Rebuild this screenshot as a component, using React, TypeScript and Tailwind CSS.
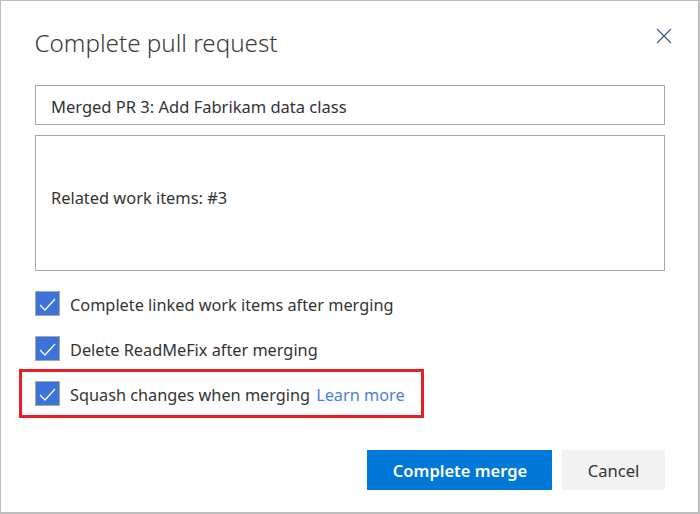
function Check({ label, link }: { label: string; link?: string }) {
  return (
    <div className="flex items-center h-[25px]">
      <span className="w-[25px] h-[25px] shrink-0 flex items-center justify-center bg-[#3b73d9] border border-[#a6a6a6]">
        <svg width="23" height="23" viewBox="0 0 23 23" fill="none">
          <path d="M4 13 L9 18 L19 7" stroke="#ffffff" strokeWidth="1.3" />
        </svg>
      </span>
      <span className="ml-[10px] text-[16.3px] leading-[27px] pt-[3px] text-[#333333] whitespace-nowrap">{label}</span>
      {link && <span className="ml-[6px] text-[16.3px] leading-[27px] pt-[3px] text-[#4a7fe0] whitespace-nowrap">{link}</span>}
    </div>
  );
}

export default function App() {
  return (
    <div className="w-[700px] h-[514px] bg-white border border-[#bdbdbd] border-b-2 border-r-2 pl-[34px] pr-[33px] relative overflow-hidden font-['Noto_Sans','Open_Sans',sans-serif]">
      <div className="h-[84px] pt-[25px] flex justify-between items-start">
        <h1 className="text-[24.2px] leading-[36px] font-light text-[#3c3c3c] ml-[-0.5px] mt-[-1px]">Complete pull request</h1>
        <svg className="mt-[2px] mr-[-7px]" width="16" height="16" viewBox="0 0 16 16" fill="none">
          <path d="M1 1 L15 15 M15 1 L1 15" stroke="#3a5a78" strokeWidth="1.2" />
        </svg>
      </div>
      <div className="h-[40px] border border-[#a6a6a6] flex items-center pl-[15px] pt-[5px] text-[16.5px] text-[#333333]">
        Merged PR 3: Add Fabrikam data class
      </div>
      <div className="mt-[10px] h-[136px] border border-[#a6a6a6] flex items-center pl-[15px] pb-[10px] text-[16.4px] text-[#333333]">
        Related work items: #3
      </div>
      <div className="mt-[20px] flex flex-col gap-[20px]">
        <Check label="Complete linked work items after merging" />
        <Check label="Delete ReadMeFix after merging" />
        <div className="relative">
          <Check label="Squash changes when merging" link="Learn more" />
          <div className="absolute left-[-16px] top-[-12px] w-[405px] h-[49px] border-[3px] border-[#ed1c24]" />
        </div>
      </div>
      <div className="mt-[44px] flex justify-end gap-[10px]">
        <button className="w-[185px] h-[40px] bg-[#0078d7] text-white text-[16.5px] font-semibold pt-[2px] pl-[1px]">Complete merge</button>
        <button className="w-[103px] h-[40px] bg-[#f3f3f3] text-[#333333] text-[16.6px] pt-[2px]">Cancel</button>
      </div>
    </div>
  );
}
